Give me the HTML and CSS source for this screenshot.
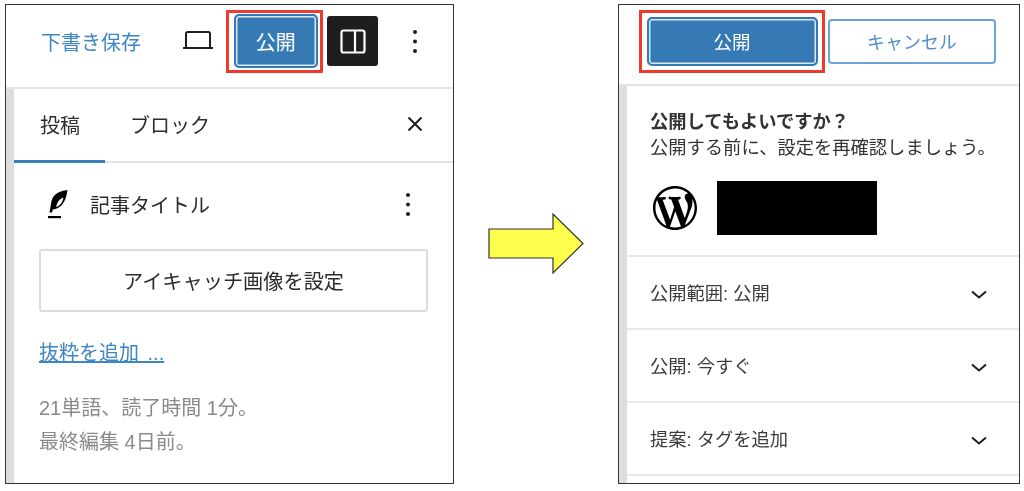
FILE: index.html
```html
<!DOCTYPE html>
<html lang="ja">
<head>
  <meta charset="UTF-8" />
  <title>公開</title>
  <link rel="stylesheet" href="styles.css">
</head>
<body>
  <div class="page">
    <!-- before -->
    <section class="panel panel-left">
      <header class="topbar">
        <a class="save-draft">下書き保存</a>
        <svg class="laptop" width="32" height="20" viewBox="0 0 32 20" fill="none" stroke="#1e1e1e" stroke-width="2">
          <path d="M4 16V2.500A1.500 1.500 0 0 1 5.500 1h21A1.500 1.500 0 0 1 28 2.500V16" />
          <path d="M1 17h30" />
        </svg>
        <div class="highlight highlight-small">
          <button class="publish publish-small">公開</button>
        </div>
        <button class="toggle">
          <svg width="26" height="25" viewBox="0 0 26 25" fill="none" stroke="#fff" stroke-width="2.200">
            <rect x="1.500" y="1.500" width="23" height="22" rx="2" />
            <path d="M15 1.500v22" />
          </svg>
        </button>
        <svg class="kebab kebab-top" width="6" height="25" viewBox="0 0 6 25" fill="#1e1e1e">
          <circle cx="3" cy="3" r="2" /><circle cx="3" cy="12.500" r="2" /><circle cx="3" cy="22" r="2" />
        </svg>
      </header>
      <div class="sidebar">
        <nav class="tabs">
          <span class="tab tab-active">投稿</span>
          <span class="tab tab-block">ブロック</span>
          <svg class="close" width="16" height="16" viewBox="0 0 16 16" stroke="#1e1e1e" stroke-width="2">
            <path d="M1.500 1.500l13 13M14.500 1.500l-13 13" />
          </svg>
        </nav>
        <div class="post-body">
          <div class="post-title">
            <svg class="feather" width="20" height="30" viewBox="0 0 20 30">
              <path fill="#000" fill-rule="evenodd" d="M19.500 1C12 2 5.500 4.500 3.500 12L1.500 23.500h2.500l.8-3C12 20 18 14 19.500 1zM15.500 8.500C12 9.500 9.500 12.500 8 18c4-1 6.500-4.500 7.500-9.500z" />
              <path fill="#000" d="M0 27h13v2.200H0z" />
            </svg>
            <span class="post-name">記事タイトル</span>
            <svg class="kebab" width="6" height="25" viewBox="0 0 6 25" fill="#1e1e1e">
              <circle cx="3" cy="3" r="2" /><circle cx="3" cy="12.500" r="2" /><circle cx="3" cy="22" r="2" />
            </svg>
          </div>
          <button class="featured">アイキャッチ画像を設定</button>
          <a class="excerpt">抜粋を追加 ...</a>
          <p class="meta">21単語、読了時間 1分。<br>最終編集 4日前。</p>
        </div>
      </div>
    </section>

    <svg class="arrow" width="96" height="61" viewBox="0 0 96 61">
      <path d="M1 16h64V1l30 29.500L65 60V45H1z" fill="#fdfd4d" stroke="#333" stroke-width="1.200" />
    </svg>

    <!-- after -->
    <section class="panel panel-right">
      <header class="topbar-right">
        <div class="highlight highlight-wide">
          <button class="publish publish-wide">公開</button>
        </div>
        <button class="cancel">キャンセル</button>
      </header>
      <div class="sidebar">
        <div class="confirm">
          <p class="confirm-text"><strong>公開してもよいですか？</strong><br>公開する前に、設定を再確認しましょう。</p>
          <div class="site">
            <svg class="wp-logo" width="44" height="44" viewBox="0 0 20 20">
              <path fill="#000" d="M20 10c0-5.510-4.490-10-10-10C4.480 0 0 4.490 0 10c0 5.520 4.480 10 10 10 5.510 0 10-4.480 10-10zM7.780 15.370L4.370 6.220c.550-.020 1.170-.080 1.170-.080.500-.060.440-1.130-.060-1.110 0 0-1.450.110-2.370.110-.180 0-.370 0-.580-.010C4.120 2.690 6.870 1.110 10 1.110c2.330 0 4.450.870 6.050 2.340-.680-.110-1.650.390-1.650 1.580 0 .740.450 1.360.900 2.100.350.610.550 1.360.550 2.460 0 1.490-1.400 5-1.400 5l-3.030-8.370c.540-.020.820-.170.820-.170.500-.050.440-1.250-.060-1.220 0 0-1.440.120-2.380.120-.870 0-2.330-.120-2.330-.120-.500-.030-.560 1.200-.060 1.220l.920.080 1.260 3.410zM17.410 10c.240-.640.740-1.870.430-4.250.700 1.290 1.050 2.710 1.050 4.250 0 3.290-1.730 6.240-4.400 7.780.970-2.590 1.940-5.200 2.920-7.780zM6.100 18.090C3.120 16.650 1.110 13.530 1.110 10c0-1.300.230-2.480.720-3.590C3.250 10.300 4.670 14.200 6.100 18.090zm4.030-6.630l2.580 6.980c-.860.290-1.760.450-2.710.450-.790 0-1.570-.110-2.290-.330.810-2.380 1.620-4.740 2.420-7.100z" />
            </svg>
            <div class="redacted"></div>
          </div>
        </div>
        <div class="row">
          <span>公開範囲: 公開</span>
          <svg class="chevron" width="16" height="9" viewBox="0 0 16 9" fill="none" stroke="#1e1e1e" stroke-width="2"><path d="M1 1.500l7 6 7-6" /></svg>
        </div>
        <div class="row">
          <span>公開: 今すぐ</span>
          <svg class="chevron" width="16" height="9" viewBox="0 0 16 9" fill="none" stroke="#1e1e1e" stroke-width="2"><path d="M1 1.500l7 6 7-6" /></svg>
        </div>
        <div class="row">
          <span>提案: タグを追加</span>
          <svg class="chevron" width="16" height="9" viewBox="0 0 16 9" fill="none" stroke="#1e1e1e" stroke-width="2"><path d="M1 1.500l7 6 7-6" /></svg>
        </div>
      </div>
    </section>
  </div>
</body>
</html>
```

FILE: styles.css
```css
* {
  box-sizing: border-box;
}
body {
  margin: 0;
  background: #fff;
  color: #1e1e1e;
  font-family: "Liberation Sans", "Noto Sans CJK JP", sans-serif;
}
p {
  margin: 0;
}
button {
  font-family: inherit;
  padding: 0;
}
.page {
  display: flex;
  align-items: flex-start;
  height: 491px;
  padding: 4px 4px 0 5px;
  overflow: hidden;
  filter: blur(0.4px);
}
.panel {
  display: flex;
  flex-direction: column;
  flex: none;
  height: 480px;
  border: 1px solid #333;
  overflow: hidden;
}
.panel-left {
  width: 449px;
}
.panel-right {
  width: 402px;
}
.arrow {
  flex: none;
  margin: 209px 34px 0 34px;
}

/* top bars */
.topbar {
  display: flex;
  align-items: center;
  flex: none;
  height: 84px;
  padding: 0 0 10px 35px;
  border-bottom: 2px solid #e4e4e4;
}
.topbar-right {
  display: flex;
  align-items: center;
  flex: none;
  height: 81px;
  padding: 0 0 7px 20px;
  border-bottom: 2px solid #e4e4e4;
}
.save-draft {
  font-size: 20px;
  color: #3f86c4;
}
.laptop {
  margin-left: 41px;
}
.highlight {
  display: flex;
  align-items: center;
  justify-content: center;
  border: 3px solid #ee3a2c;
  height: 63px;
}
.highlight-small {
  width: 97px;
  margin-left: 12px;
  padding-left: 2px;
}
.highlight-wide {
  width: 186px;
}
.publish {
  border: 2px solid #3579b5;
  border-radius: 5px;
  background: #3579b5;
  box-shadow: inset 0 0 0 1.500px #dbe8f3;
  color: #fff;
}
.publish-small {
  width: 84px;
  height: 54px;
  font-size: 20px;
}
.publish-wide {
  width: 171px;
  height: 49px;
  font-size: 18.500px;
}
.toggle {
  display: flex;
  align-items: center;
  justify-content: center;
  width: 51px;
  height: 50px;
  margin-left: 4px;
  border: none;
  border-radius: 3px;
  background: #1e1e1e;
}
.kebab-top {
  margin-left: 34px;
}
.cancel {
  width: 168px;
  height: 45px;
  margin-left: 3px;
  border: 2px solid #6ba3d6;
  border-radius: 4px;
  background: #fff;
  color: #4f8fca;
  font-size: 18px;
}

/* sidebar */
.sidebar {
  flex: 1;
  border-left: 8px solid #dedede;
}
.tabs {
  display: flex;
  align-items: center;
  height: 74px;
  padding: 0 0 2px 26px;
  border-bottom: 2px solid #e4e4e4;
  position: relative;
}
.tab {
  font-size: 20px;
  color: #2c2c2c;
}
.tab-active::after {
  content: "";
  position: absolute;
  left: 0;
  bottom: -2px;
  width: 91px;
  height: 3px;
  background: #3a80bd;
}
.tab-block {
  margin-left: 50px;
}
.close {
  margin-left: auto;
  margin-right: 30px;
}
.post-body {
  padding: 26px 25px 0 25px;
}
.post-title {
  display: flex;
  align-items: center;
  height: 30px;
}
.feather {
  margin-left: 9px;
}
.post-name {
  margin-left: 22px;
  font-size: 20px;
  color: #2c2c2c;
}
.post-title .kebab {
  margin-left: auto;
  margin-right: 17px;
}
.featured {
  display: block;
  width: 389px;
  height: 63px;
  margin-top: 30px;
  border: 2px solid #dcdcdc;
  border-radius: 3px;
  background: #fff;
  color: #2c2c2c;
  font-size: 20.200px;
}
.excerpt {
  display: block;
  margin-top: 26px;
  font-size: 20px;
  line-height: 30px;
  color: #3f86c4;
  text-decoration: underline;
  word-spacing: 3px;
}
.meta {
  margin-top: 23px;
  font-size: 20px;
  line-height: 34px;
  color: #8a8a8a;
}

/* pre publish */
.confirm {
  height: 171px;
  padding: 23px 0 0 23px;
  border-bottom: 2px solid #e8e8e8;
}
.confirm-text {
  font-size: 18.300px;
  line-height: 26px;
  color: #333;
}
.site {
  display: flex;
  align-items: center;
  margin-top: 20px;
}
.wp-logo {
  margin-left: 3px;
}
.redacted {
  width: 160px;
  height: 54px;
  margin-left: 20px;
  background: #000;
}
.row {
  display: flex;
  align-items: center;
  justify-content: space-between;
  height: 73px;
  padding: 0 32px 2px 23px;
  border-bottom: 2px solid #e8e8e8;
  font-size: 18.300px;
  color: #3c3c3c;
}
.chevron {
  margin-top: 6px;
}
```
